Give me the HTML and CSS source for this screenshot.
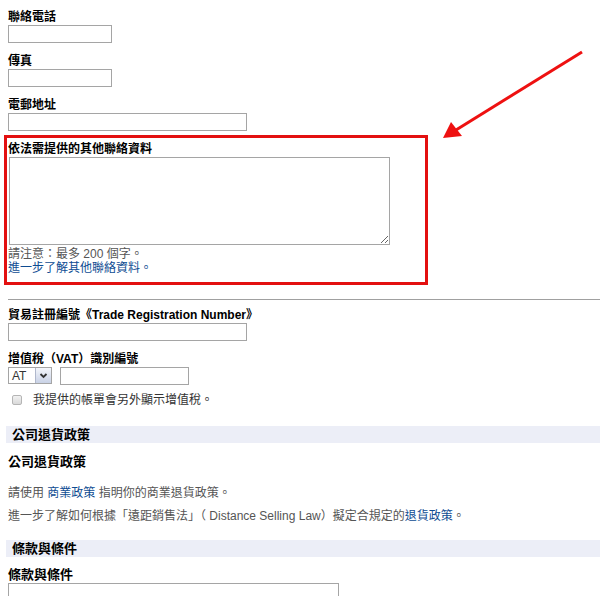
FILE: index.html
```html
<!DOCTYPE html>
<html lang="zh-Hant">

<head>
  <meta charset="UTF-8">
  <meta name="viewport" content="width=device-width, initial-scale=1.0">
  <link rel="stylesheet" href="styles.css">
  <title>賣家資料</title>
</head>

<body>
  <div class="page">
    <div class="field">
      <label class="lbl">聯絡電話</label>
      <input class="txt short" type="text">
    </div>
    <div class="field">
      <label class="lbl">傳真</label>
      <input class="txt short" type="text">
    </div>
    <div class="field">
      <label class="lbl">電郵地址</label>
      <input class="txt long" type="text">
    </div>

    <!-- 紅框標示的區塊 -->
    <div class="marked">
      <label class="lbl">依法需提供的其他聯絡資料</label>
      <textarea class="area"></textarea>
      <div class="note">請注意：最多 200 個字。</div>
      <a class="link" href="#">進一步了解其他聯絡資料。</a>
    </div>

    <hr class="line">

    <div class="field">
      <label class="lbl">貿易註冊編號《Trade Registration Number》</label>
      <input class="txt long" type="text">
    </div>
    <div class="field">
      <label class="lbl">增值稅（VAT）識別編號</label>
      <div class="vat">
        <div class="sel">
          <span>AT</span>
          <span class="sel-btn">
            <svg width="11" height="11" viewBox="0 0 11 11"><path d="M2.5 4 L5.5 7 L8.5 4" fill="none" stroke="#333" stroke-width="1.8"/></svg>
          </span>
        </div>
        <input class="txt vatno" type="text">
      </div>
    </div>
    <div class="check">
      <span class="box"></span>
      <span>我提供的帳單會另外顯示增值稅。</span>
    </div>

    <div class="sect">公司退貨政策</div>
    <div class="lbl sub">公司退貨政策</div>
    <p class="para">請使用 <a class="link" href="#">商業政策</a> 指明你的商業退貨政策。</p>
    <p class="para">進一步了解如何根據「遠距銷售法」（ Distance Selling Law）擬定合規定的<a class="link" href="#">退貨政策</a>。</p>

    <div class="sect terms">條款與條件</div>
    <div class="lbl sub2">條款與條件</div>
    <textarea class="area small"></textarea>
  </div>

  <svg class="arrow" width="600" height="596" viewBox="0 0 600 596">
    <line x1="582" y1="52" x2="456" y2="130" stroke="#ee1111" stroke-width="3"/>
    <path d="M443 138 L451 122 L462 136 Z" fill="#ee1111"/>
  </svg>
</body>

</html>
```

FILE: styles.css
```css
:root {
  --text: #333;
  --gray: #555;
  --blue: #0e4c92;
}

html {
  height: 100%;
}

body {
  margin: 0;
  background-color: #fff;
  font-family: "Liberation Sans", "Noto Sans CJK TC", sans-serif;
  font-size: 12px;
  color: var(--text);
  overflow: hidden;
}

.page {
  padding: 10px 0 0 8px;
}

.field {
  margin-bottom: 11px;
}

.lbl {
  display: block;
  font-weight: bold;
  font-size: 12px;
  line-height: 14px;
  color: #000;
  margin-bottom: 1px;
}

.txt {
  display: block;
  box-sizing: border-box;
  height: 18px;
  border: 1px solid #a5a5a5;
  margin: 0;
  padding: 0;
}

.short {
  width: 104px;
}

.long {
  width: 239px;
}

.marked {
  width: 417px;
  margin: -7px 0 0 -4px;
  border: 3px solid #e31010;
  padding: 4px 0 7px 1px;
}

.marked .lbl {
  margin-bottom: 1px;
}

.area {
  display: block;
  box-sizing: border-box;
  width: 381px;
  height: 88px;
  border: 1px solid #a5a5a5;
  margin: 0 0 0 1px;
  resize: both;
}

.note {
  color: var(--gray);
  font-size: 12px;
  line-height: 14px;
  height: 14px;
  margin-top: 2px;
}

.link {
  color: var(--blue);
  text-decoration: none;
  line-height: 14px;
}

.marked .link {
  display: block;
  font-size: 12px;
  height: 14px;
}

.line {
  border: 0;
  border-top: 1px solid #a0a0a0;
  margin: 14px 0 8px 0;
}

.vat {
  display: flex;
  gap: 8px;
  margin-top: 1px;
}

.sel {
  box-sizing: border-box;
  width: 44px;
  height: 17px;
  border: 1px solid #a5a5a5;
  display: flex;
  align-items: center;
  justify-content: space-between;
  padding-left: 3px;
  font-size: 12px;
}

.sel-btn {
  width: 15px;
  height: 15px;
  background: linear-gradient(#f4f6fb, #c9d2e6);
  border-left: 1px solid #b0b8cc;
  display: flex;
  align-items: center;
  justify-content: center;
}

.vatno {
  width: 129px;
}

.check {
  display: flex;
  align-items: center;
  gap: 11px;
  margin: -3px 0 0 4px;
  color: var(--text);
  line-height: 14px;
}

.box {
  width: 8px;
  height: 8px;
  border: 1px solid #b5b5b5;
  border-radius: 2px;
  background: linear-gradient(#f2f2f2, #d9d9d9);
}

.sect {
  margin: 19px 0 0 -2px;
  background-color: #eceef7;
  height: 17px;
  line-height: 18px;
  padding-left: 6px;
  font-weight: bold;
  font-size: 13px;
  color: #000;
}

.sub {
  margin-top: 12px;
  font-size: 13px;
}

.para {
  margin: 0;
  color: var(--gray);
  line-height: 14px;
}

.sub + .para {
  margin-top: 17px;
}

.para + .para {
  margin-top: 9px;
}

.terms {
  margin-top: 17px;
}

.sub2 {
  margin-top: 11px;
  font-size: 13px;
}

.small {
  width: 331px;
  height: 40px;
  margin-left: 0;
}

.arrow {
  position: absolute;
  left: 0;
  top: 0;
  pointer-events: none;
}
```
